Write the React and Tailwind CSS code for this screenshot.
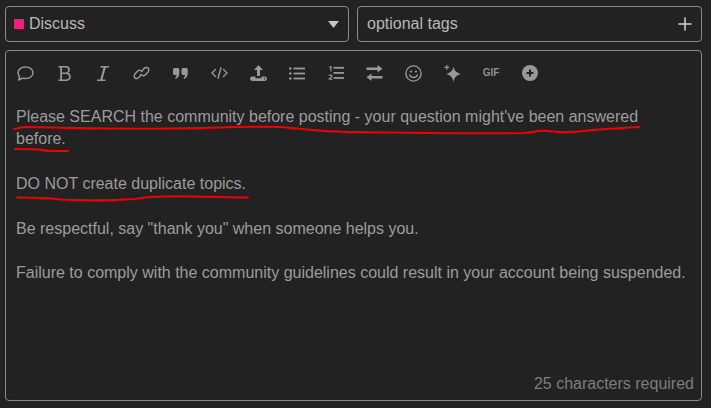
import React from 'react';

const font = { fontFamily: '"Liberation Sans", Arial, sans-serif' };

function Tool({ children }) {
  return <div className="flex h-[24px] w-[38.8px] shrink-0 items-center justify-center text-[#989898]">{children}</div>;
}

function Toolbar() {
  return (
    <div className="flex items-center pt-[10px]">
      <Tool>
        <svg width="17" height="15" viewBox="0 0 17 15" fill="none" stroke="currentColor" strokeWidth="1.500" strokeLinejoin="round">
          <path d="M1 6.800C1 3.300 4.300 1 8.500 1S16 3.300 16 6.800s-3.300 5.800-7.500 5.800c-1.100 0-2.200-.2-3.100-.5L1.800 14l.7-3.500C1.500 9.500 1 8.200 1 6.800z" />
        </svg>
      </Tool>
      <Tool>
        <svg width="13" height="15" viewBox="0 0 13 15" fill="currentColor">
          <path fillRule="evenodd" d="M.5 0H8c2.400 0 3.900 1.400 3.900 3.500 0 1.500-.7 2.600-1.900 3.200 1.700.5 2.800 1.800 2.800 3.700 0 2.700-1.900 4.600-4.600 4.600H.5v-1.500h1.700V1.500H.5V0zM4 1.500v5h3.700c1.600 0 2.400-1.100 2.400-2.500S9.300 1.500 7.700 1.500H4zM4 8v5.500h4c1.800 0 3-1.200 3-2.800S9.800 8 8 8H4z" />
        </svg>
      </Tool>
      <Tool>
        <svg width="12" height="15" viewBox="0 0 12 15" fill="currentColor">
          <path d="M3.500 0H12v1.600H8.800L5.400 13.400H8.500V15H0v-1.600h3.200L6.600 1.600H3.500V0z" />
        </svg>
      </Tool>
      <Tool>
        <svg width="17" height="14" viewBox="0 0 17 14" fill="none" stroke="currentColor" strokeWidth="1.500" strokeLinecap="round">
          <path d="M8 8.500c-.9 1.900-2.700 4.400-5 4-2-.4-2.400-2.700-1-4.500l1.700-2C5 4.500 7 4 8.300 5" />
          <path d="M9 5.500c.9-1.900 2.700-4.400 5-4 2 .4 2.400 2.700 1 4.500l-1.700 2C12 9.500 10 10 8.700 9" />
        </svg>
      </Tool>
      <Tool>
        <svg width="15" height="11" viewBox="0 0 15 11" fill="currentColor">
          <path d="M1.500 0h3.300C5.600 0 6.300.7 6.300 1.500v3.800c0 2.700-1.400 4.800-3.500 5.700L2 9.700c1-.6 1.500-1.500 1.600-2.700H1.500C.7 7 0 6.300 0 5.500v-4C0 .7.700 0 1.500 0z" />
          <path d="M10 0h3.300c.8 0 1.500.7 1.500 1.500v3.800c0 2.700-1.400 4.800-3.500 5.700l-.8-1.300c1-.6 1.500-1.500 1.600-2.700H10c-.8 0-1.500-.7-1.500-1.500v-4C8.500.7 9.200 0 10 0z" />
        </svg>
      </Tool>
      <Tool>
        <svg width="17" height="12" viewBox="0 0 17 12" fill="none" stroke="currentColor" strokeWidth="1.400" strokeLinecap="round" strokeLinejoin="round">
          <path d="M4.500 2.500 1 6l3.500 3.500M12.500 2.500 16 6l-3.500 3.500M10 .8 7 11.200" />
        </svg>
      </Tool>
      <Tool>
        <svg width="17" height="16" viewBox="0 0 17 16" fill="currentColor">
          <path d="M8.500 0 13 5H10v6H7V5H4L8.500 0z" />
          <path d="M0 13.500C0 12.200 1 11.500 2.500 11.500H5.500v1.700h6v-1.700h3c1.400 0 2.500.8 2.500 2.100 0 1.400-1.100 2.400-2.500 2.400h-12C1 16 0 15 0 13.500z" />
          <circle cx="14.600" cy="13.700" r=".7" fill="#222222" />
        </svg>
      </Tool>
      <Tool>
        <svg width="16" height="13" viewBox="0 0 16 13" fill="currentColor">
          <circle cx="1.300" cy="1.500" r="1.300" />
          <circle cx="1.300" cy="6.500" r="1.300" />
          <circle cx="1.300" cy="11.500" r="1.300" />
          <rect x="4.500" y=".6" width="11.500" height="1.800" />
          <rect x="4.500" y="5.600" width="11.500" height="1.800" />
          <rect x="4.500" y="10.600" width="11.500" height="1.800" />
        </svg>
      </Tool>
      <Tool>
        <svg width="16" height="14" viewBox="0 0 16 14" fill="currentColor">
          <path d="M1.200.8 2.600 0h.9v5.500H2.300V1.400l-1.100.5V.8z" />
          <path d="M.6 13.800v-1c1.900-1.400 2.700-2.100 2.700-2.700 0-.4-.3-.6-.8-.6s-1 .2-1.500.6l-.5-.9C1.100 8.600 1.800 8.300 2.600 8.300c1.200 0 1.900.7 1.900 1.700 0 .9-.8 1.700-2 2.700h2.100v1.100H.6z" />
          <rect x="5.500" y=".9" width="10.500" height="1.800" />
          <rect x="5.500" y="6" width="10.500" height="1.800" />
          <rect x="5.500" y="11.100" width="10.500" height="1.800" />
        </svg>
      </Tool>
      <Tool>
        <svg width="17" height="16" viewBox="0 0 17 16" fill="currentColor">
          <path d="M11.500 0 16.500 3.700 11.500 7.400V5H0.500V2.500H11.500V0z" />
          <path d="M5.500 8.600.5 12.300 5.500 16v-2.400h11v-2.500h-11V8.600z" />
        </svg>
      </Tool>
      <Tool>
        <svg width="17" height="17" viewBox="0 0 17 17" fill="none" stroke="currentColor" strokeWidth="1.400">
          <circle cx="8.500" cy="8.500" r="7.600" />
          <circle cx="6" cy="6.600" r="1.100" fill="currentColor" stroke="none" />
          <circle cx="11" cy="6.600" r="1.100" fill="currentColor" stroke="none" />
          <path d="M4.700 10c.7 1.600 2.100 2.500 3.800 2.500s3.100-.9 3.800-2.500" strokeLinecap="round" />
        </svg>
      </Tool>
      <Tool>
        <svg width="17" height="17" viewBox="0 0 17 17" fill="currentColor">
          <path d="M9.500 1.500C10.300 5.500 12 7.500 17 9c-5 1.500-6.700 3.500-7.500 8-.8-4.500-2.500-6.500-7.500-8 5-1.500 6.700-3.500 7.500-7.500z" />
          <path d="M2.200 0h1.200v1.800h1.800V3H3.400v1.800H2.200V3H.4V1.800h1.800V0z" />
        </svg>
      </Tool>
      <Tool>
        <span className="text-[10px] font-bold leading-none text-[#8f8f8f]">GIF</span>
      </Tool>
      <Tool>
        <svg width="16" height="16" viewBox="0 0 16 16">
          <circle cx="8" cy="8" r="8" fill="currentColor" />
          <path d="M8 4.500v7M4.500 8h7" stroke="#222222" strokeWidth="2" />
        </svg>
      </Tool>
    </div>
  );
}

export default function App() {
  return (
    <div className="flex h-[408px] w-[711px] flex-col gap-[8px] overflow-hidden bg-[#222222] pl-[5px] pr-[8px] pt-[6px] text-[#a9a9a9]" style={font}>
      <div className="flex gap-[8px]">
        <div className="flex h-[36px] w-[344px] items-center rounded-[4px] border border-[#8a8a8a] pl-[8px] pr-[9px] text-[16px] text-[#b8b8b8]">
          <span className="mr-[5px] h-[10px] w-[10px] bg-[#ed207b]" />
          <span>Discuss</span>
          <svg className="ml-auto" width="11" height="7" viewBox="0 0 11 7" fill="#c4c4c4"><path d="M0 0h11L5.500 7z" /></svg>
        </div>
        <div className="flex h-[36px] w-[345px] items-center justify-between rounded-[4px] border border-[#8a8a8a] pl-[9px] pr-[9px] text-[16px] text-[#b8b8b8]">
          <span>optional tags</span>
          <svg width="14" height="14" viewBox="0 0 14 14" stroke="#d4d4d4" strokeWidth="1.500"><path d="M7 .5v13M.5 7h13" /></svg>
        </div>
      </div>
      <div className="relative flex h-[351px] w-[697px] flex-col rounded-[4px] border border-[#8a8a8a]">
        <Toolbar />
        <div className="flex flex-col gap-[22.4px] pl-[10px] pr-[10px] pt-[20.6px] text-[16px] leading-[22.4px] text-[#9c9c9c]">
          <p>Please SEARCH the community before posting - your question might've been answered before.</p>
          <p>DO NOT create duplicate topics.</p>
          <p>Be respectful, say "thank you" when someone helps you.</p>
          <p>Failure to comply with the community guidelines could result in your account being suspended.</p>
        </div>
        <div className="mt-auto pb-[6px] pr-[7px] text-right text-[16px] leading-[20px] text-[#7d7d7d]">25 characters required</div>
        {/* hand drawn red underlines on top of the text */}
        <svg className="absolute left-[-6px] top-[-51px]" width="711" height="408" fill="none" stroke="#f00000" strokeWidth="2" strokeLinecap="round" strokeLinejoin="round">
          <path d="M14 129c4-1 8-2 11-2 18 0 38 1 55 1 40 1 80 1 120 0 30-1 55-2 80-1 25 2 45 5 70 5 60 1 115 2 173 1 10-1 17-3 25-2 12 1 22 2 35 0 20-2 40-3 56-4" />
          <path d="M15 149c9 0 20 0 28 1 3 1 6 1 9 1 6 0 11 0 16 0" />
          <path d="M17 197.500c14 0 30 0 43 2 25 1 50 1 75-.5 15-3 40-3 60-2.500 20 .5 35 1 53 1" />
        </svg>
      </div>
    </div>
  );
}
